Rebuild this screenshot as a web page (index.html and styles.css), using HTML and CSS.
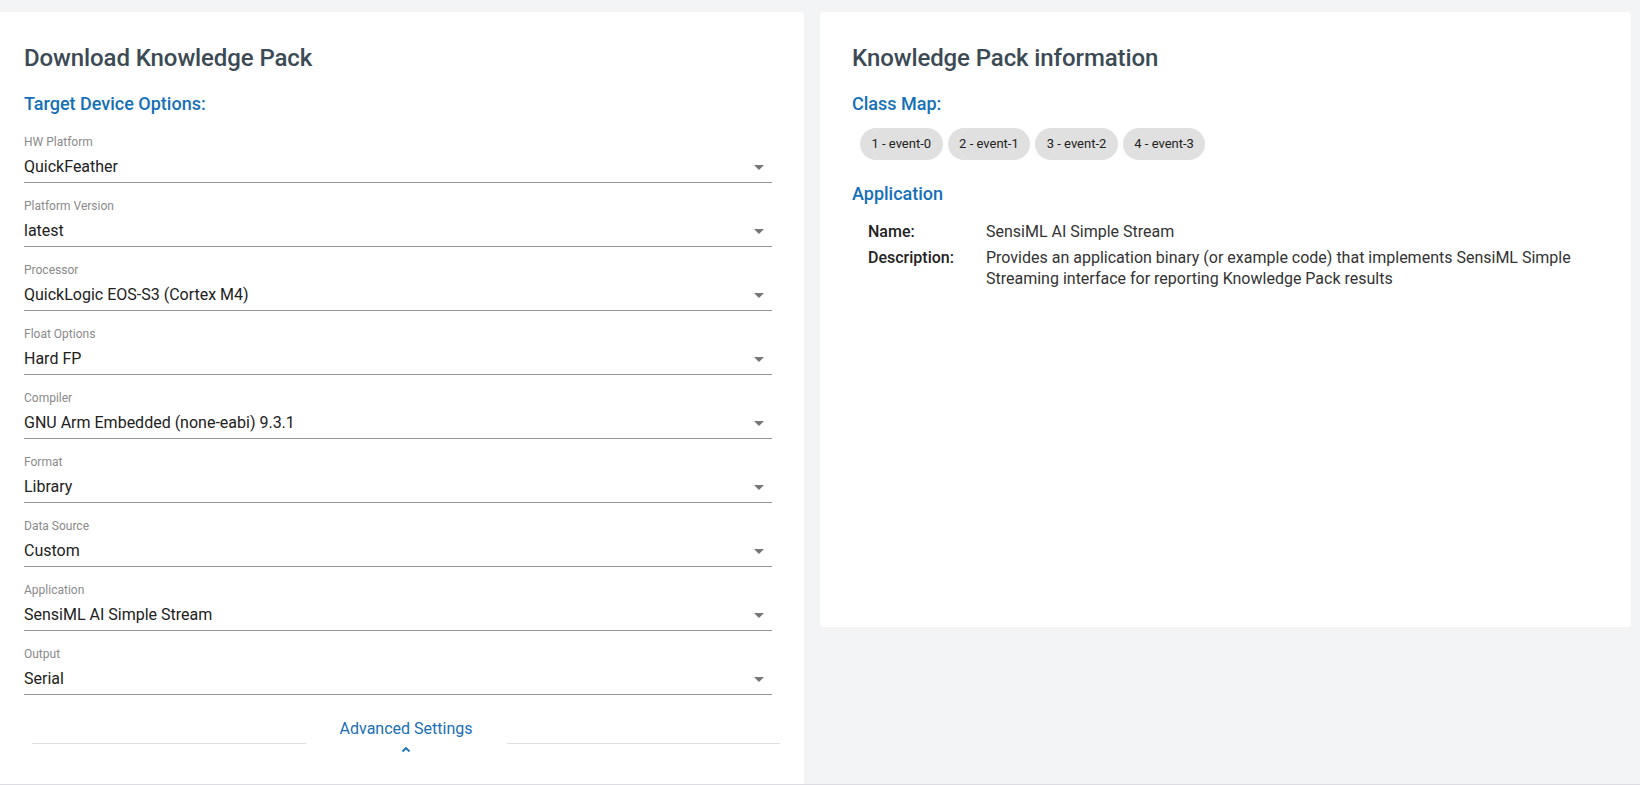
FILE: index.html
```html
<!DOCTYPE html>
<html lang="en">
<head>
<meta charset="utf-8">
<title>Download Knowledge Pack</title>
<link rel="stylesheet" href="styles.css">
</head>
<body>
<div class="page">
  <section class="card card-left">
    <h1 class="title">Download Knowledge Pack</h1>
    <h2 class="subtitle">Target Device Options:</h2>
    <div class="form">
      <div class="field"><div class="label">HW Platform</div><div class="select"><span>QuickFeather</span><i class="arrow"></i></div></div>
      <div class="field"><div class="label">Platform Version</div><div class="select"><span>latest</span><i class="arrow"></i></div></div>
      <div class="field"><div class="label">Processor</div><div class="select"><span>QuickLogic EOS-S3 (Cortex M4)</span><i class="arrow"></i></div></div>
      <div class="field"><div class="label">Float Options</div><div class="select"><span>Hard FP</span><i class="arrow"></i></div></div>
      <div class="field"><div class="label">Compiler</div><div class="select"><span>GNU Arm Embedded (none-eabi) 9.3.1</span><i class="arrow"></i></div></div>
      <div class="field"><div class="label">Format</div><div class="select"><span>Library</span><i class="arrow"></i></div></div>
      <div class="field"><div class="label">Data Source</div><div class="select"><span>Custom</span><i class="arrow"></i></div></div>
      <div class="field"><div class="label">Application</div><div class="select"><span>SensiML AI Simple Stream</span><i class="arrow"></i></div></div>
      <div class="field"><div class="label">Output</div><div class="select"><span>Serial</span><i class="arrow"></i></div></div>
    </div>
    <div class="advanced">
      <div class="adv-line"></div>
      <div class="adv-btn">
        <span class="adv-text">Advanced Settings</span>
        <svg class="chev" width="10" height="7" viewBox="0 0 10 7"><polyline points="1.5,5.5 5,2 8.5,5.5" fill="none" stroke="#1a6fb5" stroke-width="1.8"/></svg>
      </div>
      <div class="adv-line"></div>
    </div>
  </section>
  <section class="card card-right">
    <h1 class="title">Knowledge Pack information</h1>
    <h2 class="subtitle">Class Map:</h2>
    <div class="chips">
      <span class="chip">1 - event-0</span>
      <span class="chip">2 - event-1</span>
      <span class="chip">3 - event-2</span>
      <span class="chip">4 - event-3</span>
    </div>
    <h2 class="subtitle app-title">Application</h2>
    <div class="info">
      <div class="info-key">Name:</div>
      <div class="info-val">SensiML AI Simple Stream</div>
      <div class="info-key">Description:</div>
      <div class="info-val">Provides an application binary (or example code) that implements SensiML Simple Streaming interface for reporting Knowledge Pack results</div>
    </div>
  </section>
</div>
</body>
</html>
```

FILE: styles.css
```css
html, body {
  margin: 0;
  padding: 0;
}
body {
  background: #f3f4f6;
  font-family: Roboto, "Liberation Sans", Arial, sans-serif;
  color: #212121;
  height: 785px;
  overflow: hidden;
}
.page {
  display: flex;
  align-items: flex-start;
  gap: 16px;
  padding: 12px 9px 0 0;
  height: 772px;
  overflow: hidden;
  border-bottom: 1px solid #dcdce2;
}
.card {
  background: #fff;
  border-radius: 4px;
  box-sizing: border-box;
}
.card-left {
  width: 804px;
  flex: 0 0 804px;
  padding: 32px 32px 40px 24px;
  border-top-left-radius: 0;
  border-bottom-left-radius: 0;
}
.card-right {
  flex: 1;
  height: 615px;
  padding: 32px 32px 0 32px;
}
.title {
  margin: 0 0 21px;
  font-size: 24px;
  line-height: 28px;
  font-weight: 500;
  color: #3b4a54;
  letter-spacing: -0.1px;
}
.subtitle {
  margin: 0;
  font-size: 18px;
  line-height: 22px;
  font-weight: 500;
  color: #1570b8;
}
.form {
  margin-top: 19px;
}
.field {
  margin-bottom: 15px;
}
.label {
  font-size: 12px;
  line-height: 16px;
  color: #8a8a8a;
}
.select {
  display: flex;
  align-items: center;
  justify-content: space-between;
  box-sizing: border-box;
  height: 33px;
  padding: 6px 8px 5px 0;
  font-size: 16px;
  line-height: 21px;
  color: #212121;
  border-bottom: 1px solid #949494;
}
.arrow {
  width: 0;
  height: 0;
  border-left: 5px solid transparent;
  border-right: 5px solid transparent;
  border-top: 5px solid #777;
  margin-top: 1px;
}
.advanced {
  display: flex;
  align-items: flex-start;
  margin: 24px -8px 0 8px;
}
.adv-line {
  flex: 1;
  height: 1px;
  background: #e0e0e0;
  margin-top: 24px;
}
.adv-btn {
  width: 201px;
  display: flex;
  flex-direction: column;
  align-items: center;
}
.adv-text {
  font-size: 16px;
  line-height: 20px;
  color: #1a6fb5;
}
.chev {
  margin-top: 7px;
  display: block;
}
.chips {
  display: flex;
  gap: 5px;
  padding-left: 8px;
  margin: 13px 0 23px;
}
.chip {
  height: 32px;
  line-height: 32px;
  padding: 0 11.5px;
  border-radius: 16px;
  background: #e0e0e0;
  font-size: 13px;
  color: #222;
}
.info {
  display: grid;
  grid-template-columns: 118px 1fr;
  row-gap: 5px;
  margin: 16px 0 0 16px;
  font-size: 16px;
  line-height: 21px;
}
.info-key {
  font-weight: 500;
  color: #222;
}
.info-val {
  color: #333;
}
```
